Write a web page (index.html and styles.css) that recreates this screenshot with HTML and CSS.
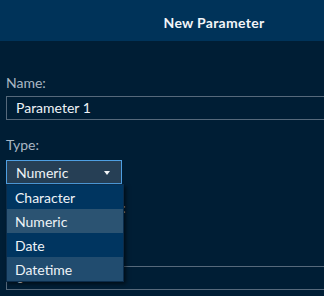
FILE: index.html
```html
<!DOCTYPE html>
<html lang="en">
<head>
  <meta charset="UTF-8" />
  <title>New Parameter</title>
  <link rel="stylesheet" href="styles.css">
</head>
<body>
  <div class="dialog">
    <div class="header">New Parameter</div>
    <div class="form">
      <div class="field">
        <div class="label">Name:</div>
        <div class="input">Parameter 1</div>
      </div>
      <div class="field field-type">
        <div class="label">Type:</div>
        <div class="select-wrap">
          <div class="select">
            <span>Numeric</span>
            <span class="arrow"></span>
          </div>
          <ul class="menu">
            <li>Character</li>
            <li class="selected">Numeric</li>
            <li>Date</li>
            <li class="hover">Datetime</li>
          </ul>
        </div>
      </div>
      <div class="field field-format">
        <div class="label">Number of decimals:</div>
      </div>
      <div class="field field-default">
        <div class="label">Default value:</div>
        <div class="input">0</div>
      </div>
    </div>
  </div>
</body>
</html>
```

FILE: styles.css
```css
:root {
  --header-bg: #003359;
  --body-bg: #001e35;
  --label: #aab7c4;
  --text: #eef3f7;
  --field-border: #56697b;
  --select-bg: #263f55;
  --select-border: #4e9fe2;
  --menu-bg: #003560;
  --menu-selected: #2b5372;
  --menu-hover: #214c6f;
}
* { box-sizing: border-box; margin: 0; padding: 0; }
html, body { height: 100%; overflow: hidden; }
body {
  background: var(--body-bg);
  font-family: Lato, "Open Sans", sans-serif;
  color: var(--text);
}
.dialog { width: 428px; }
.header {
  background: var(--header-bg);
  height: 41px;
  text-align: center;
  font-size: 14px; font-weight: 700;
  letter-spacing: 0.3px;
  line-height: 17px;
  padding-top: 14px;
  color: #f2f5f8;
}
.form { padding: 33px 6px 0; }
.field { margin-bottom: 16px; }
.label {
  color: var(--label);
  font-size: 14px; line-height: 17px;
  margin-bottom: 5px;
}
.input {
  height: 24px;
  border: 1px solid var(--field-border);
  font-size: 14px; line-height: 17px;
  padding: 2px 9px 0;
  color: var(--text);
}
.field-type .label { margin-bottom: 7px; }
.select-wrap { position: relative; width: 116px; }
.select {
  height: 24px;
  background: var(--select-bg);
  border: 1px solid var(--select-border);
  font-size: 14px; line-height: 17px;
  padding: 2px 9px 0;
  display: flex; justify-content: space-between; align-items: center;
}
.select span:first-child { align-self: flex-start; padding-top: 1px; }
.arrow {
  width: 0; height: 0;
  border-left: 3px solid transparent;
  border-right: 3px solid transparent;
  border-top: 4px solid #f2f5f8;
  margin-right: 2px;
}
.menu {
  position: absolute; top: 24px; left: 0;
  width: 118px;
  list-style: none;
  background: var(--menu-bg);
  border: 1px solid #0b2c4a;
  box-shadow: 2px 2px 4px rgba(0, 0, 0, 0.55);
  z-index: 2;
}
.menu li {
  height: 24px;
  font-size: 14px; line-height: 17px;
  padding: 4px 8px 0;
  color: var(--text);
}
.menu li.selected { background: var(--menu-selected); }
.menu li.hover { background: var(--menu-hover); }
.field-format { margin-bottom: 0; }
.field-format .label { margin-top: -1px; letter-spacing: -0.36px; }
.field-default { margin-top: 28px; }
```
